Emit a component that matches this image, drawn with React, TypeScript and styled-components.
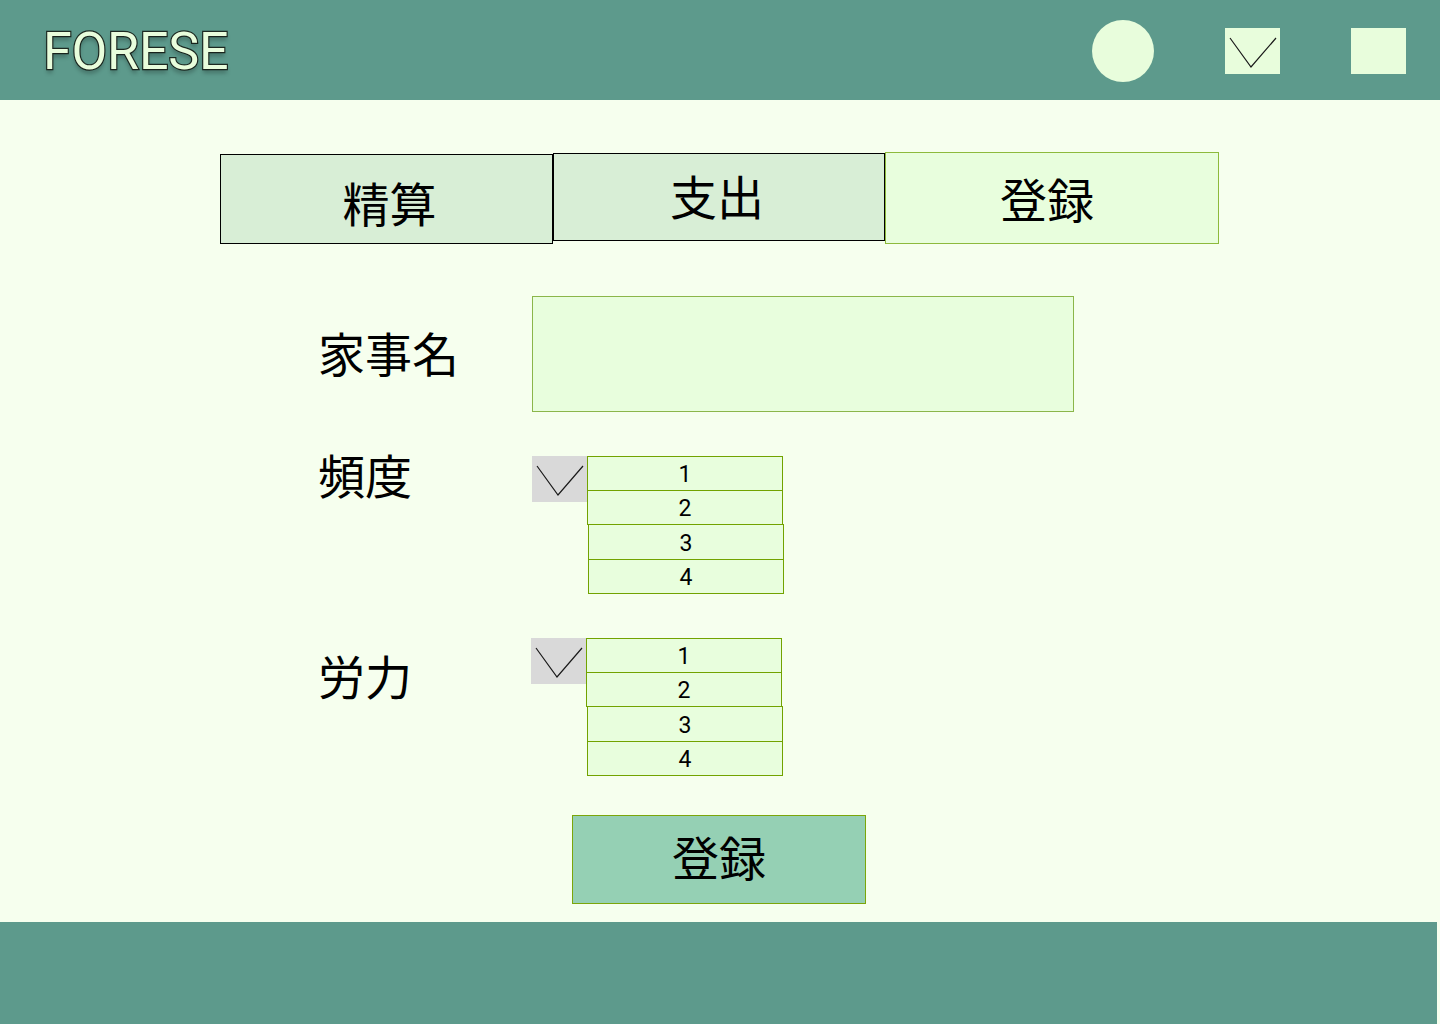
import React from "react";
import styled, { createGlobalStyle } from "styled-components";

const Global = createGlobalStyle`
  html, body { margin: 0; padding: 0; }
  body {
    background: #F6FFEE;
    font-family: Roboto, "Noto Sans CJK JP", sans-serif;
    color: #000;
  }
`;

const Page = styled.div`
  width: 1440px;
  height: 1024px;
  display: flex;
  flex-direction: column;
  background: #F6FFEE;
  overflow: hidden;
`;

const Header = styled.header`
  height: 100px;
  flex: none;
  background: #5D9A8C;
  display: flex;
  align-items: center;
  padding-left: 43px;
  box-sizing: border-box;
`;

const Logo = styled.div`
  font-family: Roboto, sans-serif;
  font-size: 52px;
  font-weight: 400;
  color: #E8FDDC;
  -webkit-text-stroke: 2.4px #1d2a22;
  paint-order: stroke fill;
  text-shadow: 0 4px 4px rgba(0, 0, 0, 0.28);
  letter-spacing: -0.2px;
  margin-top: 2px;
`;

const HeaderIcons = styled.div`
  margin-left: auto;
  display: flex;
  align-items: center;
  margin-right: 34px;
`;

const Circle = styled.div`
  width: 62px;
  height: 62px;
  border-radius: 50%;
  background: #E8FDDC;
  margin-top: 2px;
`;

const SquareIcon = styled.div<{ $ml: number }>`
  width: 55px;
  height: 46px;
  background: #E8FDDC;
  margin-left: ${(p) => p.$ml}px;
  margin-top: 2px;
  display: flex;
`;

const Main = styled.main`
  flex: 1;
  display: flex;
  flex-direction: column;
`;

const Tabs = styled.div`
  display: flex;
  align-items: flex-start;
  padding-left: 220px;
  margin-top: 52px;
  height: 92px;
`;

const Tab = styled.div<{
  $w: number;
  $h: number;
  $top: number;
  $pad: string;
  $active?: boolean;
}>`
  box-sizing: border-box;
  width: ${(p) => p.$w}px;
  height: ${(p) => p.$h}px;
  margin-top: ${(p) => p.$top}px;
  padding: ${(p) => p.$pad};
  background: ${(p) => (p.$active ? "#E8FEDD" : "#D8EED6")};
  border: 1px solid ${(p) => (p.$active ? "#8DBA3C" : "#000")};
  display: flex;
  align-items: center;
  justify-content: center;
  font-family: "Noto Sans CJK JP", sans-serif;
  font-size: 47px;
  line-height: 1;
`;

const Form = styled.div`
  display: flex;
  flex-direction: column;
  padding-left: 320px;
  margin-top: 52px;
`;

const Row = styled.div<{ $mt: number; $center?: boolean }>`
  display: flex;
  align-items: ${(p) => (p.$center ? "center" : "flex-start")};
  margin-top: ${(p) => p.$mt}px;
`;

const Label = styled.div<{ $top: number }>`
  width: 212px;
  flex: none;
  font-family: "Noto Sans CJK JP", sans-serif;
  font-size: 47px;
  line-height: 54px;
  margin-top: ${(p) => p.$top}px;
  margin-left: -2px;
`;

const TextInput = styled.div`
  width: 542px;
  height: 116px;
  box-sizing: border-box;
  background: #E8FEDD;
  border: 1px solid #8BB64A;
  margin-left: 2px;
`;

const Select = styled.div<{ $ml: number }>`
  display: flex;
  align-items: flex-start;
  margin-left: ${(p) => p.$ml}px;
`;

const ChevronBox = styled.div`
  width: 55px;
  height: 46px;
  background: #D9D9D9;
  flex: none;
  display: flex;
`;

const Options = styled.div`
  display: flex;
  flex-direction: column;
`;

const Option = styled.div<{ $shift: number; $h: number }>`
  box-sizing: border-box;
  width: 196px;
  height: ${(p) => p.$h}px;
  margin-left: ${(p) => p.$shift}px;
  margin-top: -1px;
  &:first-child { margin-top: 0; }
  background: #E8FEDD;
  border: 1px solid #72A300;
  display: flex;
  align-items: center;
  justify-content: center;
  font-family: Roboto, sans-serif;
  font-size: 23px;
  padding-top: 2px;
`;

const Submit = styled.div`
  box-sizing: border-box;
  width: 294px;
  height: 89px;
  margin-top: 39px;
  margin-left: 572px;
  padding-bottom: 8px;
  background: #95D0B4;
  border: 1px solid #7BA60A;
  display: flex;
  align-items: center;
  justify-content: center;
  font-family: "Noto Sans CJK JP", sans-serif;
  font-size: 47px;
  line-height: 1;
`;

const Footer = styled.footer`
  height: 102px;
  width: 1437px;
  flex: none;
  background: #5D9A8C;
`;

const Chevron = () => (
  <svg width="55" height="46" viewBox="0 0 55 46">
    <polyline points="5,10 26,39 51,10" fill="none" stroke="#1a1a1a" strokeWidth="1.2" />
  </svg>
);

const opts = [
  { n: "1", shift: 0, h: 35 },
  { n: "2", shift: 0, h: 35 },
  { n: "3", shift: 1, h: 36 },
  { n: "4", shift: 1, h: 35 },
];

const Dropdown = ({ ml }: { ml: number }) => (
  <Select $ml={ml}>
    <ChevronBox>
      <Chevron />
    </ChevronBox>
    <Options>
      {opts.map((o) => (
        <Option key={o.n} $shift={o.shift} $h={o.h}>
          {o.n}
        </Option>
      ))}
    </Options>
  </Select>
);

export default function App() {
  return (
    <Page>
      <Global />
      <Header>
        <Logo>FORESE</Logo>
        <HeaderIcons>
          <Circle />
          <SquareIcon $ml={71}>
            <Chevron />
          </SquareIcon>
          <SquareIcon $ml={71} />
        </HeaderIcons>
      </Header>
      <Main>
        <Tabs>
          <Tab $w={333} $h={90} $top={2} $pad="4px 0 0 6px">精算</Tab>
          <Tab $w={332} $h={88} $top={1} $pad="0 4px 6px 0">支出</Tab>
          <Tab $w={334} $h={92} $top={0} $pad="0 10px 2px 0" $active>登録</Tab>
        </Tabs>
        <Form>
          <Row $mt={0} $center>
            <Label $top={-4}>家事名</Label>
            <TextInput />
          </Row>
          <Row $mt={44}>
            <Label $top={-9}>頻度</Label>
            <Dropdown ml={2} />
          </Row>
          <Row $mt={44}>
            <Label $top={10}>労力</Label>
            <Dropdown ml={1} />
          </Row>
        </Form>
        <Submit>登録</Submit>
      </Main>
      <Footer />
    </Page>
  );
}
